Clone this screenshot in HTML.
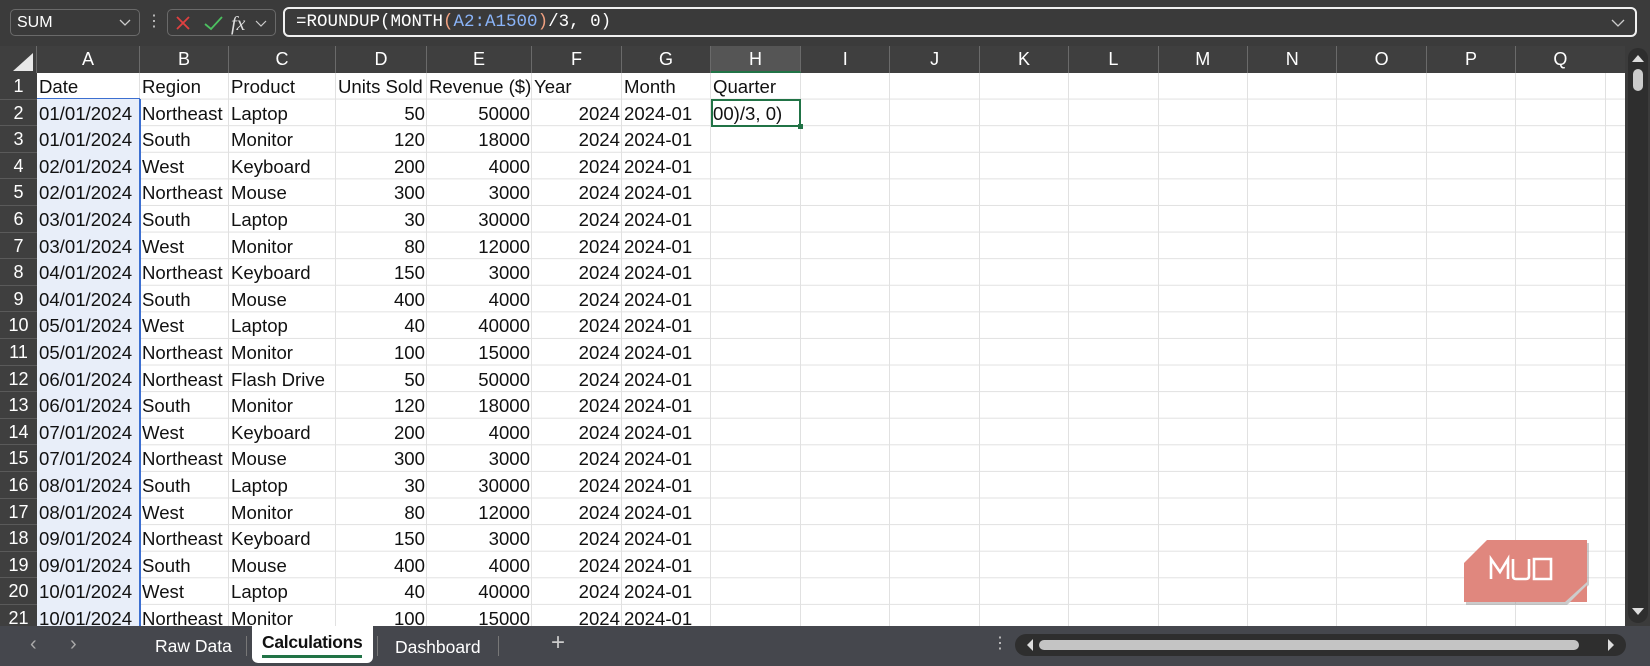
<!DOCTYPE html>
<html><head><meta charset="utf-8"><style>
*{margin:0;padding:0;box-sizing:border-box}
body{width:1650px;height:666px;background:#3b3b3b;position:relative;overflow:hidden;font-family:"Liberation Sans",sans-serif}
.abs{position:absolute}
.ch{position:absolute;top:46px;height:27px;color:#fff;font-size:18px;text-align:center;line-height:27px;border-right:1px solid #6a6a6a;background:#3f3f3f}
.rh{position:absolute;left:0;width:37px;color:#fff;font-size:18px;text-align:center;background:#3f3f3f;border-bottom:1px solid #5a5a5a}
.c{position:absolute;font-size:18.6px;color:#111;white-space:nowrap;line-height:28px;padding:0 2px;overflow:visible}
.r{text-align:right}
</style></head><body>
<div class="abs" style="left:10px;top:9px;width:130px;height:27px;border:1px solid #6a6a6a;border-radius:5px;background:#3a3a3a;color:#fff;font-size:16px;line-height:25px;padding-left:6px">SUM<svg style="position:absolute;right:8px;top:9px" width="12" height="8"><path d="M1 1 L6 6 L11 1" stroke="#ccc" stroke-width="1.3" fill="none"/></svg></div>
<div class="abs" style="left:146px;top:12px;color:#ccc;font-size:16px;line-height:20px">&#8942;</div>
<div class="abs" style="left:167px;top:9px;width:109px;height:27px;border:1px solid #6a6a6a;border-radius:5px;background:#3a3a3a">
<svg width="109" height="27" style="position:absolute;left:0;top:0"><path d="M9 7 L21 19 M21 7 L9 19" stroke="#e04040" stroke-width="1.8"/><path d="M37 14 L43 19 L54 7" stroke="#4cc060" stroke-width="1.8" fill="none"/><text x="63" y="20" fill="#ddd" font-family="Liberation Serif" font-style="italic" font-size="20">fx</text><path d="M88 11 L93 16 L98 11" stroke="#ccc" stroke-width="1.2" fill="none"/></svg></div>
<div class="abs" style="left:283px;top:7px;width:1354px;height:30px;border:2px solid #f0f0f0;border-radius:6px;background:#3a3a3a;font-family:'Liberation Mono',monospace;font-size:17.5px;line-height:26px;color:#fff;padding-left:11px">=ROUNDUP(MONTH<span style="color:#f0a080">(</span><span style="color:#8ab4f8">A2:A1500</span><span style="color:#f0a080">)</span>/3, 0)<svg style="position:absolute;right:10px;top:10px" width="14" height="8"><path d="M1 1 L7 7 L13 1" stroke="#ccc" stroke-width="1.3" fill="none"/></svg></div>
<div class="abs" style="left:37px;top:73px;width:1588px;height:553px;background:#fff;
background-image:linear-gradient(to bottom,#e1e1e1 1px,transparent 1px);background-size:100% 26.6px;background-position:0 25.6px"></div>
<div class="abs" style="left:37px;top:99px;width:103px;height:527px;background:#e8eef9"></div>
<div id="vl"></div>
<div class="abs" style="left:0;top:46px;width:37px;height:27px;background:#3f3f3f;border-right:1px solid #6a6a6a"><svg width="37" height="27"><path d="M13 25 L33 25 L33 7 Z" fill="#e8e8e8"/></svg></div>
<div id="hdr"></div>
<div id="cells"></div>
<div class="abs" style="left:139px;top:99px;width:2px;height:527px;background:#3c6fd0"></div>
<div class="abs" style="left:37px;top:98px;width:103px;height:1px;background:#3c6fd0"></div>
<div class="abs" style="left:711px;top:99px;width:90px;height:28px;border:2px solid #217346"></div>
<div class="abs" style="left:798px;top:124px;width:5px;height:5px;background:#217346"></div>
<svg class="abs" style="left:1455px;top:535px" width="140" height="75"><g transform="translate(-1455,-535)"><polygon points="1466,566 1489,543 1589,543 1589,585 1567,605 1466,605" fill="#999" opacity=".5"/><polygon points="1464,563 1487,540 1587,540 1587,582 1565,602 1464,602" fill="#e0877e"/><polygon points="1570,602 1587,585 1587,602" fill="#e0877e"/>
<path d="M1491 579 V559 L1500 572 L1508 559 V579 M1513 559 V576 Q1513 579 1516 579 H1526 Q1529 579 1529 576 V559 M1534 559 H1551 V579 H1534 Z" stroke="#fff" stroke-width="2.6" fill="none"/></g></svg>
<div class="abs" style="left:1625px;top:46px;width:25px;height:580px;background:#3b3b3b"></div>
<div class="abs" style="left:1628px;top:48px;width:20px;height:575px;background:#2e2e2e;border-radius:10px"></div>
<svg class="abs" style="left:1628px;top:52px" width="20" height="570"><path d="M4 10 L10 3 L16 10Z" fill="#ddd"/><rect x="5" y="17" width="10" height="22" rx="5" fill="#ccc"/><path d="M4 556 L10 563 L16 556Z" fill="#ddd"/></svg>
<div class="abs" style="left:0;top:626px;width:1650px;height:40px;background:#45474d"></div>
<div class="abs" style="left:30px;top:633px;color:#aaa;font-size:20px">&#8249;</div>
<div class="abs" style="left:70px;top:633px;color:#aaa;font-size:20px">&#8250;</div>
<div class="abs" style="left:155px;top:636px;color:#fff;font-size:17.5px">Raw Data</div>
<div class="abs" style="left:246px;top:636px;width:1px;height:20px;background:#777"></div>
<div class="abs" style="left:252px;top:626px;width:121px;height:37px;background:#fff;border-radius:0 0 6px 6px"></div>
<div class="abs" style="left:262px;top:632px;color:#111;font-size:17.5px;font-weight:bold;letter-spacing:-0.3px">Calculations</div>
<div class="abs" style="left:262px;top:655px;width:100px;height:3px;background:#217346"></div>
<div class="abs" style="left:377px;top:636px;width:1px;height:20px;background:#777"></div>
<div class="abs" style="left:395px;top:637px;color:#fff;font-size:17.5px">Dashboard</div>
<div class="abs" style="left:498px;top:636px;width:1px;height:20px;background:#777"></div>
<div class="abs" style="left:551px;top:629px;color:#ccc;font-size:24px">+</div>
<div class="abs" style="left:992px;top:633px;color:#ccc;font-size:16px">&#8942;</div>
<div class="abs" style="left:1015px;top:634px;width:611px;height:22px;background:#2e2e2e;border-radius:11px"></div>
<svg class="abs" style="left:1015px;top:634px" width="611" height="22"><path d="M12 11 L18 5 L18 17Z" fill="#ddd"/><rect x="24" y="6" width="540" height="10" rx="5" fill="#c4c4c4"/><path d="M599 11 L593 5 L593 17Z" fill="#ddd"/></svg>
<script>
var cols=[["A",37,103],["B",140,89],["C",229,107],["D",336,91],["E",427,105],["F",532,90],["G",622,89],["H",711,90]];
var L=["I","J","K","L","M","N","O","P","Q"];var x=801;
L.forEach(function(l){cols.push([l,x,89.4]);x+=89.4});
var h="",v="";
cols.forEach(function(c){var bg=c[0]=="H"?"background:#555;border-bottom:2px solid #217346;":"";
h+='<div class="ch" style="left:'+c[1]+'px;width:'+c[2]+'px;'+bg+'">'+c[0]+'</div>';
v+='<div class="abs" style="left:'+(c[1]+c[2]-1)+'px;top:73px;width:1px;height:553px;background:#e1e1e1"></div>';});
h+='<div class="ch" style="left:1605px;width:20px;border:none"></div>';
document.getElementById("vl").innerHTML=v;
var d=[["Date","Region","Product","Units Sold","Revenue ($)","Year","Month","Quarter"],
["01/01/2024","Northeast","Laptop",50,50000,2024,"2024-01","00)/3, 0)"],
["01/01/2024","South","Monitor",120,18000],["02/01/2024","West","Keyboard",200,4000],
["02/01/2024","Northeast","Mouse",300,3000],["03/01/2024","South","Laptop",30,30000],
["03/01/2024","West","Monitor",80,12000],["04/01/2024","Northeast","Keyboard",150,3000],
["04/01/2024","South","Mouse",400,4000],["05/01/2024","West","Laptop",40,40000],
["05/01/2024","Northeast","Monitor",100,15000],["06/01/2024","Northeast","Flash Drive",50,50000],
["06/01/2024","South","Monitor",120,18000],["07/01/2024","West","Keyboard",200,4000],
["07/01/2024","Northeast","Mouse",300,3000],["08/01/2024","South","Laptop",30,30000],
["08/01/2024","West","Monitor",80,12000],["09/01/2024","Northeast","Keyboard",150,3000],
["09/01/2024","South","Mouse",400,4000],["10/01/2024","West","Laptop",40,40000],
["10/01/2024","Northeast","Monitor",100,15000]];
var s="";
d.forEach(function(r,i){var y=73+i*26.6;
h+='<div class="rh" style="top:'+y+'px;height:26.6px;line-height:27px">'+(i+1)+'</div>';
var row=r.slice();if(i>1){row[5]=2024;row[6]="2024-01";}
row.forEach(function(t,j){if(t===undefined)return;var c=cols[j];var right=(i>0&&(j==3||j==4||j==5));
s+='<div class="c'+(right?' r':'')+'" style="left:'+c[1]+'px;'+(right?'width:'+c[2]+'px;':'')+'top:'+y+'px">'+t+'</div>';});});
document.getElementById("hdr").innerHTML=h;
document.getElementById("cells").innerHTML=s;
</script>
</body></html>
